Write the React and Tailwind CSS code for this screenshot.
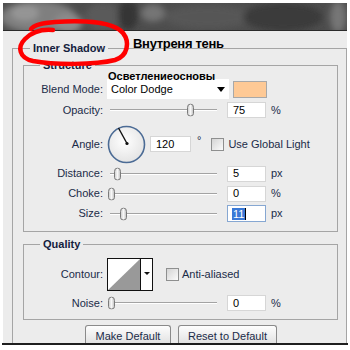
import React from "react";

function Thumb({ x }) {
  return (
    <svg
      width="9"
      height="13"
      viewBox="0 0 9 13"
      className="absolute top-1/2 -translate-y-1/2"
      style={{ left: x }}
    >
      <defs>
        <linearGradient id="thg" x1="0" y1="0" x2="1" y2="0">
          <stop offset="0" stopColor="#c9c9c9" />
          <stop offset="0.5" stopColor="#f8f8f8" />
          <stop offset="1" stopColor="#bdbdbd" />
        </linearGradient>
      </defs>
      <path
        d="M1.5 4 Q1.5 0.5 4.5 0.5 Q7.5 0.5 7.5 4 L7.5 10 Q7.5 12.5 4.5 12.5 Q1.5 12.5 1.5 10 Z"
        fill="url(#thg)"
        stroke="#7a7a7a"
      />
    </svg>
  );
}

function Slider({ thumb }) {
  return (
    <div className="relative ml-[4px] w-[110px] h-full flex items-center">
      <div className="ml-[3px] flex-1 h-[2px] border-t border-[#a3a3a3] bg-white" />
      <Thumb x={thumb - 107 - 4} />
    </div>
  );
}

function Input({ children, focused }) {
  return (
    <div
      className={
        focused
          ? "ml-[10px] w-[39px] h-[17px] bg-white border border-[#86a7d2] flex items-center pl-[4px] text-[11px] text-black"
          : "ml-[10px] w-[39px] h-[16px] bg-white border border-[#d6d6d6] flex items-center pl-[5px] text-[11px] text-black"
      }
    >
      {children}
    </div>
  );
}

function Checkbox({ className }) {
  return (
    <div
      className={
        "w-[13px] h-[13px] border border-[#8e8f8f] bg-gradient-to-br from-[#d4d4d4] to-[#fbfbfb] " +
        className
      }
    />
  );
}

function Label({ children }) {
  return <div className="w-[79px] text-right text-[11px] text-[#1b2b48]">{children}</div>;
}

function SliderRow({ label, thumb, value, unit, className, focused }) {
  return (
    <div className={"flex items-center " + className}>
      <Label>{label}</Label>
      <Slider thumb={thumb} />
      <Input focused={focused}>{value}</Input>
      <span className="ml-[5px] text-[11px] text-[#1b2b48]">{unit}</span>
    </div>
  );
}

export default function App() {
  return (
    <div className="relative w-[350px] h-[350px] bg-white overflow-hidden font-['Liberation_Sans',Arial,sans-serif]">
      <div className="ml-[3px] pt-[3px] w-[344px] flex flex-col">
        {/* banner */}
        <div className="h-[28px] border-b border-[#2b2b2b] overflow-hidden">
          <svg width="344" height="27" className="block">
            <defs>
              <filter id="bl" x="-30%" y="-80%" width="160%" height="260%">
                <feGaussianBlur stdDeviation="3" />
              </filter>
            </defs>
            <rect width="344" height="27" fill="#4d4d4d" />
            <g filter="url(#bl)">
              <ellipse cx="35" cy="14" rx="38" ry="16" fill="#7f7f7f" />
              <ellipse cx="22" cy="10" rx="14" ry="8" fill="#959595" />
              <ellipse cx="65" cy="20" rx="14" ry="10" fill="#8c8c8c" />
              <ellipse cx="100" cy="14" rx="18" ry="14" fill="#5a5a5a" />
              <ellipse cx="125" cy="12" rx="10" ry="15" fill="#343434" />
              <ellipse cx="150" cy="10" rx="12" ry="9" fill="#747474" />
              <ellipse cx="205" cy="14" rx="45" ry="12" fill="#565656" />
              <ellipse cx="280" cy="14" rx="40" ry="14" fill="#3b3b3b" />
              <ellipse cx="335" cy="14" rx="8" ry="16" fill="#767676" />
            </g>
          </svg>
        </div>

        {/* panel */}
        <div className="h-[312px] bg-[#ececec] pt-[10px] pl-[9px] overflow-hidden">
          <fieldset className="h-[320px] border border-b-0 border-[#a5a5a5] pl-[10px] pr-[8px]">
            <legend className="ml-[7px] px-[3px] text-[11px] leading-[14px] font-bold text-[#14213d]">
              Inner Shadow
            </legend>

            {/* Structure */}
            <fieldset className="mt-[3px] border border-[#a5a5a5] pb-[9px]">
              <legend className="ml-[16px] px-[3px] text-[11px] leading-[14px] font-bold text-[#14213d]">
                Structure
              </legend>

              <div className="flex items-center h-[20px] mt-[7px]">
                <Label>Blend Mode:</Label>
                <div className="ml-[4px] w-[122px] h-[20px] bg-white flex items-center pl-[4px] text-[11px] text-black">
                  <span className="flex-1">Color Dodge</span>
                  <svg width="8" height="5" viewBox="0 0 8 5" className="mr-[4px]">
                    <path d="M0 0 L8 0 L4 5 Z" fill="#000" />
                  </svg>
                </div>
                <div className="ml-[4px] w-[34px] h-[17px] bg-[#fec995] border border-[#a8a8a8]" />
              </div>

              <SliderRow className="h-[18px] mt-[2px]" label="Opacity:" thumb={190} value="75" unit="%" />

              <div className="flex items-center h-[38px] mt-[6px]">
                <Label>Angle:</Label>
                <svg width="39" height="39" viewBox="0 0 39 39" className="ml-[4px]">
                  <defs>
                    <radialGradient id="dg" cx="0.45" cy="0.4" r="0.6">
                      <stop offset="0" stopColor="#ffffff" />
                      <stop offset="1" stopColor="#e4e4e4" />
                    </radialGradient>
                  </defs>
                  <circle cx="19.5" cy="19.5" r="18" fill="url(#dg)" stroke="#4b6b95" strokeWidth="1.6" />
                  <line x1="20" y1="18.5" x2="11.5" y2="3" stroke="#111" strokeWidth="1.4" />
                  <circle cx="20" cy="18.5" r="1.6" fill="#111" />
                </svg>
                <div className="ml-[4px] w-[41px] h-[16px] bg-white border border-[#d6d6d6] flex items-center pl-[5px] text-[11px] text-black">
                  120
                </div>
                <span className="ml-[6px] text-[11px] text-[#1b2b48] self-start mt-[10px] leading-none">°</span>
                <Checkbox className="ml-[10px]" />
                <span className="ml-[4px] text-[11px] text-[#1b2b48]">Use Global Light</span>
              </div>

              <SliderRow className="h-[17px] mt-[2px]" label="Distance:" thumb={117} value="5" unit="px" />
              <SliderRow className="h-[17px] mt-[3px]" label="Choke:" thumb={111} value="0" unit="%" />
              <SliderRow
                className="h-[17px] mt-[3px]"
                label="Size:"
                thumb={123}
                value={
                  <span className="flex items-center">
                    <span className="bg-[#3a79d6] text-white px-[1px] leading-[12px]">11</span>
                    <span className="w-[1px] h-[12px] bg-black" />
                  </span>
                }
                unit="px"
                focused
              />
            </fieldset>

            {/* Quality */}
            <fieldset className="mt-[5px] border border-[#a5a5a5] pb-[8px]">
              <legend className="ml-[16px] px-[3px] text-[11px] leading-[14px] font-bold text-[#14213d]">
                Quality
              </legend>
              <div className="flex items-center h-[33px] mt-[7px]">
                <Label>Contour:</Label>
                <svg width="46" height="33" viewBox="0 0 46 33" className="ml-[4px]">
                  <rect x="0.5" y="0.5" width="45" height="32" fill="#fff" stroke="#111" />
                  <polygon points="1,32 33,1 33,32" fill="#999" />
                  <line x1="33.5" y1="0.5" x2="33.5" y2="32.5" stroke="#111" />
                  <path d="M37 14 L43 14 L40 17 Z" fill="#111" />
                </svg>
                <Checkbox className="ml-[13px]" />
                <span className="ml-[3px] text-[11px] text-[#1b2b48]">Anti-aliased</span>
              </div>
              <SliderRow className="h-[16px] mt-[4px]" label="Noise:" thumb={111} value="0" unit="%" />
            </fieldset>

            <div className="flex mt-[5px] ml-[62px] gap-[7px]">
              <div className="w-[86px] h-[20px] border border-b-0 border-[#8a8a8a] rounded-t-[3px] bg-gradient-to-b from-[#fdfdfd] to-[#e0e0e0] flex items-start pt-[2px] justify-center text-[11px] text-[#1b2b48]">
                Make Default
              </div>
              <div className="w-[99px] h-[20px] border border-b-0 border-[#8a8a8a] rounded-t-[3px] bg-gradient-to-b from-[#fdfdfd] to-[#e0e0e0] flex items-start pt-[2px] justify-center text-[11px] text-[#1b2b48]">
                Reset to Default
              </div>
            </div>
          </fieldset>
        </div>
        <div className="-ml-[1px] w-[346px] h-[2px] bg-[#1e1e1e]" />
      </div>

      {/* annotations */}
      <div className="absolute left-[133px] top-[37px] text-[13px] leading-none font-bold tracking-[-0.3px] text-black">
        Внутреня тень
      </div>
      <div className="absolute left-[108px] top-[71px] text-[11px] leading-none font-bold text-black">
        Осветлениеосновы
      </div>
      <svg width="350" height="350" className="absolute left-0 top-0 pointer-events-none">
        <path
          d="M 53 30 C 42 29, 32 32, 25 39 C 17 47, 19 58, 33 61 C 55 65, 95 65, 115 60 C 128 56, 130 42, 123 33 C 114 22, 85 20, 55 22 C 42 23, 34 25, 31 29"
          fill="none"
          stroke="#ff0000"
          strokeWidth="4.5"
          strokeLinecap="round"
          strokeLinejoin="round"
        />
      </svg>
    </div>
  );
}
